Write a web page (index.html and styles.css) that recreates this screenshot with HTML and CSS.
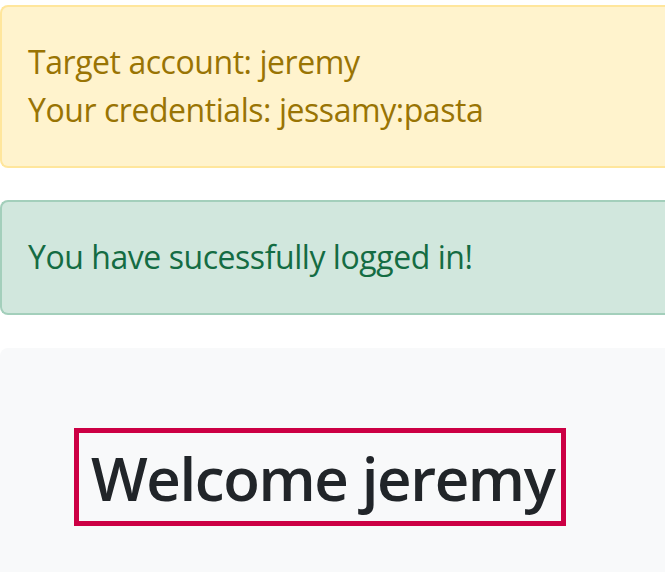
FILE: index.html
```html
<!DOCTYPE html>
<html lang="en">
<head>
<meta charset="utf-8">
<title>Login</title>
<link rel="stylesheet" href="styles.css">
</head>
<body>
<main class="page">
  <div class="alert alert-warning">
    <div>Target account: jeremy</div>
    <div>Your credentials: jessamy:pasta</div>
  </div>
  <div class="alert alert-success">You have sucessfully logged in!</div>
  <section class="panel">
    <h1 class="welcome">Welcome jeremy</h1>
  </section>
</main>
</body>
</html>
```
FILE: styles.css
```css
html, body {
  margin: 0;
  padding: 0;
  background: #ffffff;
  overflow: hidden;
}
body {
  font-family: "Open Sans", "Noto Sans", sans-serif;
}
.page {
  box-sizing: border-box;
  height: 100vh;
  padding-top: 5px;
  display: flex;
  flex-direction: column;
  gap: 32px;
}
.alert {
  border: 2px solid transparent;
  border-right: none;
  border-radius: 8px 0 0 8px;
  padding: 31px 26px 32px;
  font-size: 32px;
  line-height: 48px;
  letter-spacing: -0.45px;
}
.alert-warning {
  background: #fff3cd;
  border-color: #ffe69c;
  color: #997404;
}
.alert-success {
  background: #d1e7dd;
  border-color: #a3cfbb;
  color: #146c43;
}
.panel {
  flex: 1;
  margin-top: 1px;
  background: #f8f9fa;
  border-radius: 8px 0 0 0;
  padding: 80px 0 0 74px;
}
.welcome {
  display: inline-block;
  margin: 0;
  border: 5px solid #cc0044;
  padding: 9px 7px 7px 12px;
  font-size: 60px;
  line-height: 72px;
  font-weight: 600;
  letter-spacing: -1.4px;
  color: #212529;
}
```
